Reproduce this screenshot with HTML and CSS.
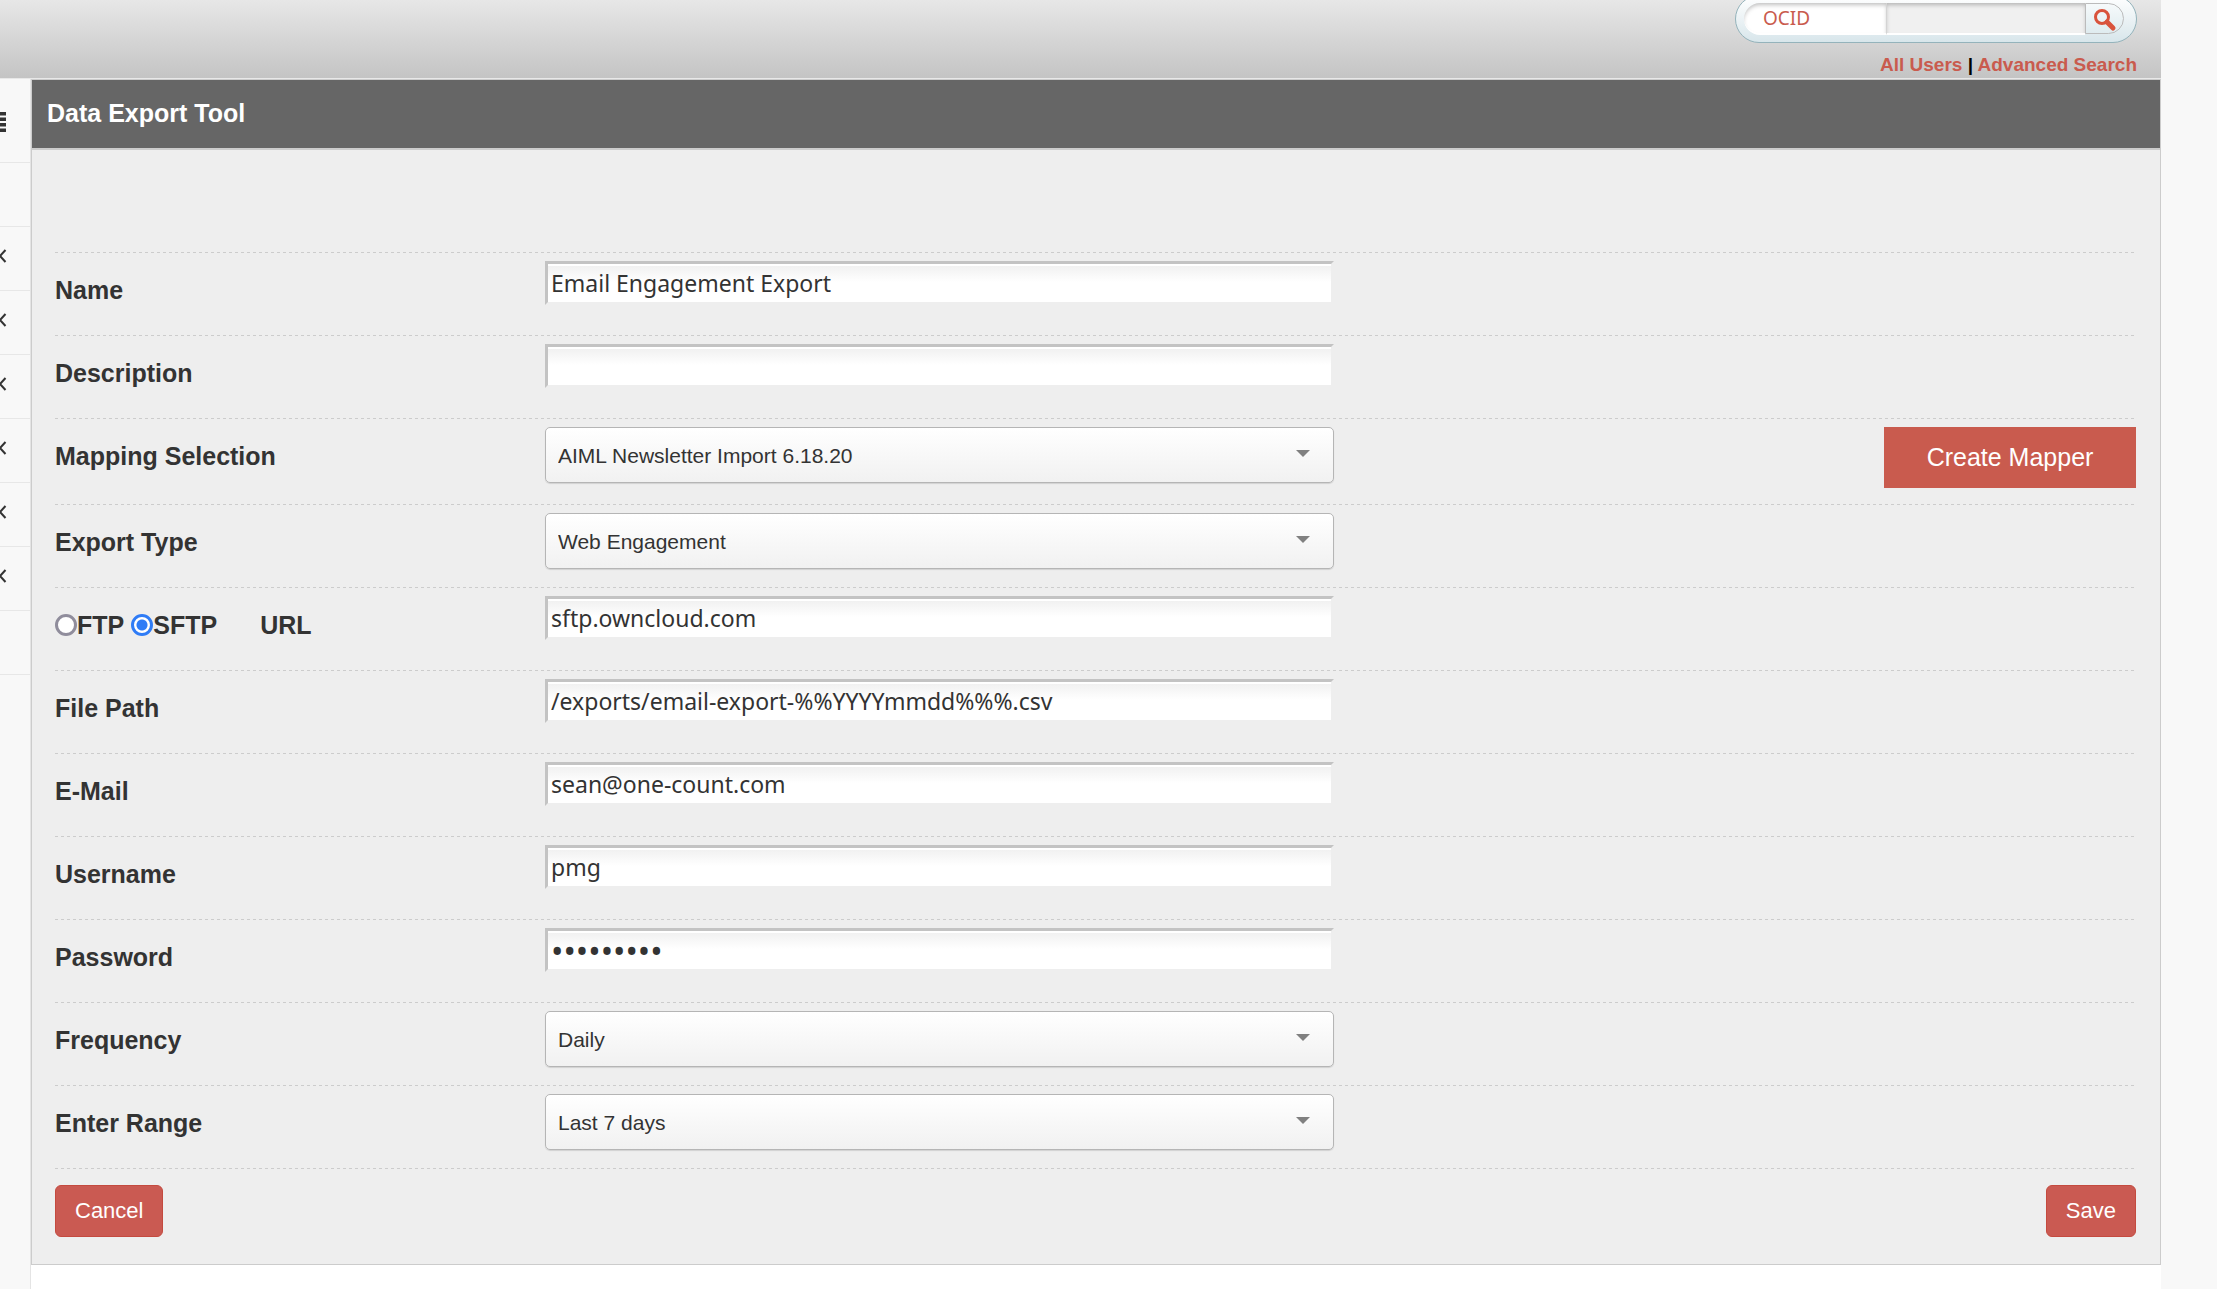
FILE: index.html
```
<!DOCTYPE html>
<html lang="en">
<head>
    <meta charset="UTF-8">
    <meta name="viewport" content="width=device-width, initial-scale=1.0">
    <title>Data Export Tool</title>
    <link rel="stylesheet" href="styles.css">
</head>
<body>
    <header class="topbar">
        <form class="search-box">
            <select class="search-type" aria-label="Search by">
                <option>OCID</option>
            </select>
            <input class="search-input" type="text" aria-label="Search">
            <button class="search-btn" type="button" aria-label="Go">
                <svg width="24" height="24" viewBox="0 0 24 24" fill="none" stroke="#d9533c">
                    <circle cx="9" cy="8" r="6.500" stroke-width="3"/>
                    <line x1="14" y1="13" x2="20" y2="19" stroke-width="5" stroke-linecap="round"/>
                </svg>
            </button>
        </form>
        <nav class="search-links">
            <a href="#">All Users</a> | <a href="#">Advanced Search</a>
        </nav>
    </header>

    <div class="layout">
        <nav class="sidebar">
            <div class="side-item side-toggle">
                <svg width="7" height="20" viewBox="0 0 7 20" fill="#333">
                    <path d="M0 0h6v3.500H0zM0 5.500h6v3.500H0zM0 11h6v3.500H0zM0 16.500h6v3.500H0z"/>
                </svg>
            </div>
            <div class="side-item"></div>
            <div class="side-item"><svg class="chev" viewBox="0 0 7 14"><path d="M5.500 1L0 7l5.500 6"/></svg></div>
            <div class="side-item"><svg class="chev" viewBox="0 0 7 14"><path d="M5.500 1L0 7l5.500 6"/></svg></div>
            <div class="side-item"><svg class="chev" viewBox="0 0 7 14"><path d="M5.500 1L0 7l5.500 6"/></svg></div>
            <div class="side-item"><svg class="chev" viewBox="0 0 7 14"><path d="M5.500 1L0 7l5.500 6"/></svg></div>
            <div class="side-item"><svg class="chev" viewBox="0 0 7 14"><path d="M5.500 1L0 7l5.500 6"/></svg></div>
            <div class="side-item"><svg class="chev" viewBox="0 0 7 14"><path d="M5.500 1L0 7l5.500 6"/></svg></div>
            <div class="side-item"></div>
        </nav>

        <main class="content">
            <section class="panel">
                <h1 class="panel-title">Data Export Tool</h1>
                <form class="panel-body">
                    <div class="row">
                        <label class="label" for="name">Name</label>
                        <input class="text" id="name" type="text" value="Email Engagement Export">
                    </div>
                    <div class="row">
                        <label class="label" for="description">Description</label>
                        <input class="text" id="description" type="text">
                    </div>
                    <div class="row">
                        <label class="label" for="mapping">Mapping Selection</label>
                        <div class="select">
                            <select id="mapping"><option>AIML Newsletter Import 6.18.20</option></select>
                        </div>
                        <button class="mapper-btn" type="button">Create Mapper</button>
                    </div>
                    <div class="row">
                        <label class="label" for="type">Export Type</label>
                        <div class="select">
                            <select id="type"><option>Web Engagement</option></select>
                        </div>
                    </div>
                    <div class="row">
                        <div class="label protocol">
                            <label><input type="radio" name="protocol">FTP</label>
                            <label><input type="radio" name="protocol" checked>SFTP</label>
                            <label class="url-label" for="url">URL</label>
                        </div>
                        <input class="text" id="url" type="text" value="sftp.owncloud.com">
                    </div>
                    <div class="row">
                        <label class="label" for="path">File Path</label>
                        <input class="text" id="path" type="text" value="/exports/email-export-%%YYYYmmdd%%%.csv">
                    </div>
                    <div class="row">
                        <label class="label" for="email">E-Mail</label>
                        <input class="text" id="email" type="text" value="sean@one-count.com">
                    </div>
                    <div class="row">
                        <label class="label" for="username">Username</label>
                        <input class="text" id="username" type="text" value="pmg">
                    </div>
                    <div class="row">
                        <label class="label" for="password">Password</label>
                        <input class="text" id="password" type="password" value="password1">
                    </div>
                    <div class="row">
                        <label class="label" for="frequency">Frequency</label>
                        <div class="select">
                            <select id="frequency"><option>Daily</option></select>
                        </div>
                    </div>
                    <div class="row">
                        <label class="label" for="range">Enter Range</label>
                        <div class="select">
                            <select id="range"><option>Last 7 days</option></select>
                        </div>
                    </div>
                    <div class="actions">
                        <button class="btn" type="button">Cancel</button>
                        <button class="btn" type="button">Save</button>
                    </div>
                </form>
            </section>
        </main>
    </div>
</body>
</html>
```

FILE: styles.css
```
* {
  box-sizing: border-box;
}

body {
  margin: 0;
  min-height: 100vh;
  display: flex;
  flex-direction: column;
  padding-right: 56px;
  background: #f8f8f8;
  font-family: "Liberation Sans", Arial, sans-serif;
  color: #333;
  overflow: hidden;
}

/* Top bar */
.topbar {
  height: 79px;
  padding-right: 24px;
  display: flex;
  flex-direction: column;
  align-items: flex-end;
  gap: 10px;
  background: linear-gradient(#e7e7e7, #c4c4c4);
  border-bottom: 1px solid #e8e8e8;
}

.search-box {
  display: flex;
  flex: none;
  width: 402px;
  height: 48px;
  margin-top: -5px;
  padding: 7px 12px 7px 8px;
  border: 1px solid #94b3bb;
  border-radius: 24px;
  background: linear-gradient(#fff, #d8e6eb);
}

.search-type,
.search-input {
  height: 32px;
  border: 0;
  border-bottom: 2px solid #fff;
  box-shadow: inset 0 3px 4px -1px rgba(0, 0, 0, 0.25);
  font-family: "Noto Sans", sans-serif;
  font-size: 19px;
}

.search-type {
  appearance: none;
  width: 142px;
  padding: 0 0 0 19px;
  border-radius: 16px 0 0 16px;
  background: #fff;
  color: #c95b4e;
}

.search-input {
  flex: 1;
  min-width: 0;
  border-left: 1px solid #d4d4d4;
  background: #f0f0f0;
}

.search-btn {
  width: 39px;
  height: 31px;
  padding: 4px 0 0 7px;
  border: 1px solid #bbb;
  border-radius: 0 16px 16px 0;
  background: linear-gradient(#f6fafb, #dfebef);
}

.search-btn svg {
  display: block;
}

.search-links {
  font-size: 19px;
  line-height: 24px;
  font-weight: bold;
  color: #000;
}

.search-links a {
  color: #c95b4e;
  text-decoration: none;
}

/* Layout */
.layout {
  flex: 1;
  display: flex;
}

.sidebar {
  flex: none;
  width: 31px;
  border-right: 1px solid #e4e4e4;
}

.side-item {
  height: 64px;
  padding-top: 22px;
  border-bottom: 1px solid #e7e7e7;
}

.side-toggle {
  height: 84px;
  padding-top: 33px;
}

.side-item svg {
  display: block;
}

.chev {
  width: 7px;
  height: 14px;
  fill: none;
  stroke: #333;
  stroke-width: 2;
}

.content {
  flex: 1;
  background: #fff;
}

/* Panel */
.panel {
  border: 1px solid #ccc;
  background: #eee;
}

.panel-title {
  margin: 0;
  height: 70px;
  padding: 0 15px;
  border-bottom: 2px solid #ccc;
  background: #666;
  color: #fff;
  font-size: 25px;
  line-height: 66px;
}

.panel-body {
  padding: 102px 24px 27px 23px;
}

/* dashed rule on top of every row */
.row,
.actions {
  display: flex;
  background: repeating-linear-gradient(90deg, #ccc 0 3px, transparent 3px 6px) top / 100% 1px no-repeat;
}

.row {
  align-items: flex-start;
  min-height: 83px;
  padding: 9px 0 16px;
}

.label {
  flex: none;
  width: 490px;
  font-size: 25px;
  font-weight: bold;
  line-height: 58px;
}

.protocol {
  display: flex;
  gap: 7px;
}

.protocol label {
  display: flex;
  align-items: center;
}

.protocol .url-label {
  margin-left: 36px;
}

.protocol input {
  appearance: none;
  width: 22px;
  height: 22px;
  margin: 0;
  border: 3px solid #908d9c;
  border-radius: 50%;
  background: #fff;
}

.protocol input:checked {
  border-color: #2f7cf6;
  background: radial-gradient(circle, #2f7cf6 5px, #fff 6px);
}

.text {
  width: 38%;
  max-width: 789px;
  height: 44px;
  padding: 0 3px;
  border: 3px solid;
  border-color: #c3c3c3 #eee #eee #c3c3c3;
  background: linear-gradient(#fff 2px, #f1f1f1 2px, #fff 18px);
  font-family: "Noto Sans", sans-serif;
  font-size: 23px;
  color: #333;
}

.text[type="password"] {
  font-size: 33px;
}

.select {
  position: relative;
  width: 38%;
  max-width: 789px;
}

.select select {
  appearance: none;
  display: block;
  width: 100%;
  height: 56px;
  padding: 0 12px;
  border: 1px solid #b5b5b5;
  border-radius: 5px;
  background: linear-gradient(#fff, #f1f1f1);
  box-shadow: 0 1px 1px rgba(0, 0, 0, 0.12);
  font-family: inherit;
  font-size: 21px;
  color: #333;
}

.select::after {
  content: "";
  position: absolute;
  top: 23px;
  right: 24px;
  border: 7px solid transparent;
  border-top-color: #808080;
  border-bottom: 0;
  pointer-events: none;
}

.mapper-btn {
  margin-left: auto;
  width: 252px;
  height: 61px;
  border: 0;
  background: #c95b4e;
  color: #fff;
  font-family: inherit;
  font-size: 25px;
}

.actions {
  justify-content: space-between;
  padding-top: 17px;
}

.btn {
  height: 52px;
  padding: 0 19px;
  border: 1px solid #c44a3f;
  border-radius: 6px;
  background: #ca5a52;
  color: #fff;
  font-family: inherit;
  font-size: 22px;
}
```
